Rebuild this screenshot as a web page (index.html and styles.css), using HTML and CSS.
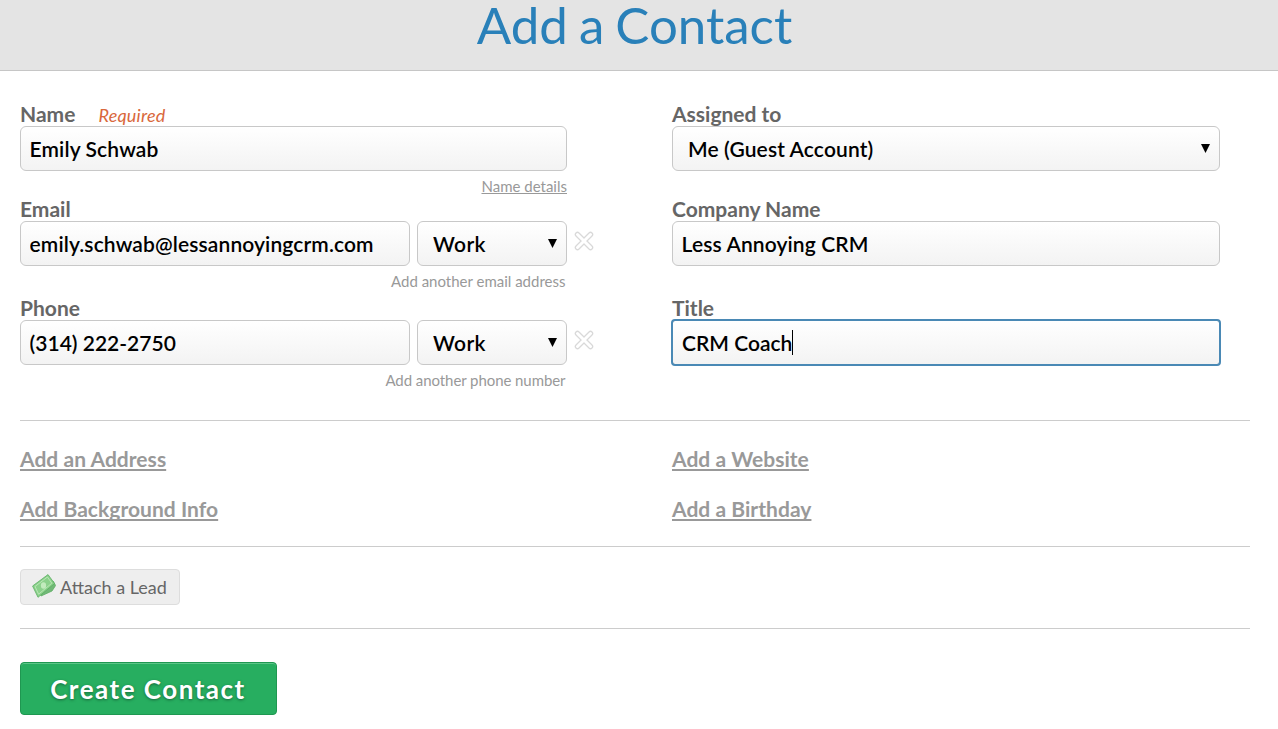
FILE: index.html
```html
<!DOCTYPE html>
<html>
<head>
    <meta charset="utf-8">
    <title>Add a Contact</title>
    <link rel="stylesheet" href="styles.css">
</head>
<body>
    <div class="header">
        <h1>Add a Contact</h1>
    </div>

    <form class="content">
        <div class="columns">
            <div class="column">
                <div class="row row-name">
                    <label>Name <em class="required">Required</em></label>
                    <input class="field" type="text" value="Emily Schwab">
                    <a class="hint underlined">Name details</a>
                </div>
                <div class="row">
                    <label>Email</label>
                    <div class="group">
                        <input class="field" type="text" value="emily.schwab@lessannoyingcrm.com" spellcheck="false">
                        <div class="select type">
                            <select class="field"><option>Work</option></select>
                            <svg class="arrow" width="9" height="9" viewBox="0 0 9 9"><path d="M0 0h9L4.5 9z"/></svg>
                        </div>
                        <svg class="remove" width="20" height="20" viewBox="0 0 20 20"><path class="edge" d="M3.5 3.5l13 13M16.5 3.5l-13 13"/><path class="inner" d="M3.5 3.5l13 13M16.5 3.5l-13 13"/></svg>
                    </div>
                    <a class="hint">Add another email address</a>
                </div>
                <div class="row">
                    <label>Phone</label>
                    <div class="group">
                        <input class="field phone" type="text" value="(314) 222-2750">
                        <div class="select type">
                            <select class="field"><option>Work</option></select>
                            <svg class="arrow" width="9" height="9" viewBox="0 0 9 9"><path d="M0 0h9L4.5 9z"/></svg>
                        </div>
                        <svg class="remove" width="20" height="20" viewBox="0 0 20 20"><path class="edge" d="M3.5 3.5l13 13M16.5 3.5l-13 13"/><path class="inner" d="M3.5 3.5l13 13M16.5 3.5l-13 13"/></svg>
                    </div>
                    <a class="hint phone-hint">Add another phone number</a>
                </div>
            </div>
            <div class="column">
                <div class="row row-name">
                    <label>Assigned to</label>
                    <div class="select">
                        <select class="field"><option>Me (Guest Account)</option></select>
                        <svg class="arrow" width="9" height="9" viewBox="0 0 9 9"><path d="M0 0h9L4.5 9z"/></svg>
                    </div>
                </div>
                <div class="row">
                    <label>Company Name</label>
                    <input class="field" type="text" value="Less Annoying CRM">
                </div>
                <div class="row">
                    <label>Title</label>
                    <div class="field focused">CRM Coach<span class="caret"></span></div>
                </div>
            </div>
        </div>

        <div class="more">
            <a>Add an Address</a>
            <a>Add a Website</a>
            <a>Add Background Info</a>
            <a>Add a Birthday</a>
        </div>

        <div class="lead">
            <button type="button" class="attach">
                <svg class="money" width="24" height="24" viewBox="0 0 24 24">
                    <path class="bill back" d="M7 13L21 7l2.6 4.5-3.6 5.5L9 22z"/>
                    <path class="bill" d="M.6 12L16 .6 22.5 9.5 6 23.3z"/>
                    <path class="frame" d="M3 12.5L15.4 3l4.4 6.2L6.6 20.2z"/>
                    <ellipse cx="11.5" cy="11.5" rx="2.6" ry="3.2"/>
                </svg>
                Attach a Lead
            </button>
        </div>

        <button type="button" class="create">Create Contact</button>
    </form>
</body>
</html>
```

FILE: styles.css
```css
* {
    box-sizing: border-box;
}

body {
    margin: 0;
    background: #fff;
    font-family: Lato, "Liberation Sans", sans-serif;
}

.header {
    height: 71px;
    background: #e4e4e4;
    border-bottom: 1px solid #c6c6c6;
}

h1 {
    margin: 0;
    padding-right: 9px;
    text-align: center;
    font-size: 51px;
    font-weight: 400;
    line-height: 50px;
    word-spacing: -2px;
    color: #2980b9;
}

.content {
    width: 1230px;
    margin-left: 20px;
    padding-top: 31px;
}

.columns {
    display: flex;
    gap: 105px;
    height: 319px;
    border-bottom: 1px solid #ccc;
}

.column {
    width: 547px;
}

.column + .column {
    width: 548px;
}

.row {
    display: flex;
    flex-direction: column;
    height: 99px;
}

.row-name {
    height: 95px;
}

label {
    height: 24px;
    font-size: 21px;
    font-weight: 700;
    line-height: 23px;
    color: #666;
}

.required {
    margin-left: 18px;
    font-size: 18px;
    font-weight: 400;
    letter-spacing: .2px;
    color: #d9683c;
}

.field {
    width: 100%;
    height: 45px;
    padding: 0 9px;
    border: 1px solid #c8c8c8;
    border-radius: 6px;
    background: linear-gradient(#fff, #f3f3f3);
    font-family: inherit;
    font-size: 21px;
    font-weight: 600;
    line-height: 43px;
    letter-spacing: .12px;
    color: #000;
    outline: none;
    appearance: none;
}

input.field {
    padding: 0 9px 1px 8.6px;
    line-height: 42px;
}

input.phone {
    letter-spacing: 0;
}

.focused {
    display: flex;
    align-items: center;
    border-color: #bbb;
    border-radius: 3px;
    outline: 2px solid #4a89b5;
    outline-offset: -1px;
    letter-spacing: 0;
}

.caret {
    width: 1px;
    height: 25px;
    background: #000;
}

.group {
    display: flex;
    gap: 7px;
    width: 574px;
}

.group > .field {
    width: 390px;
}

.select {
    position: relative;
}

.select .field {
    padding: 0 9px 0 15px;
}

.type {
    width: 150px;
    flex-shrink: 0;
}

.type .field {
    letter-spacing: .4px;
}

.arrow {
    position: absolute;
    top: 18px;
    right: 10px;
}

.remove {
    flex-shrink: 0;
    margin-top: 10px;
}

.remove path {
    fill: none;
    stroke-linecap: round;
}

.remove .edge {
    stroke: #d9d9d9;
    stroke-width: 5.5;
}

.remove .inner {
    stroke: #fff;
    stroke-width: 3;
}

.hint {
    align-self: flex-end;
    margin-top: 5px;
    padding-right: 1.5px;
    font-size: 15px;
    line-height: 20px;
    color: #999;
}

.phone-hint {
    letter-spacing: -.07px;
}

.underlined {
    padding-right: 0;
    text-decoration: underline;
}

.more {
    display: grid;
    grid-template-columns: 652px 1fr;
    grid-auto-rows: 50px;
    height: 126px;
    padding-top: 13px;
    border-bottom: 1px solid #ccc;
}

.more a {
    font-size: 21px;
    font-weight: 700;
    line-height: 50px;
    letter-spacing: .04px;
    color: #999;
    text-decoration: underline;
    text-decoration-skip-ink: none;
}

.lead {
    height: 82px;
    padding-top: 22px;
    border-bottom: 1px solid #ccc;
}

.attach {
    display: flex;
    align-items: center;
    gap: 4px;
    width: 160px;
    height: 36px;
    padding: 0 0 0 11px;
    border: 1px solid #ddd;
    border-radius: 4px;
    background: #eee;
    font-family: inherit;
    font-size: 18px;
    color: #666;
    white-space: nowrap;
}

.money {
    margin-top: -2px;
}

.bill {
    fill: #8bd18b;
    stroke: #5cae62;
    stroke-width: .8;
}

.back {
    fill: #72b878;
}

.frame {
    fill: none;
    stroke: #b9e6b5;
}

.money ellipse {
    fill: #c2ebbd;
}

.create {
    display: block;
    width: 257px;
    height: 53px;
    margin-top: 33px;
    padding: 0 1px 0 0;
    border: 1px solid #1f9751;
    border-radius: 4px;
    background: #27ae60;
    box-shadow: inset 0 1px 0 #5cc588;
    font-family: inherit;
    font-size: 26px;
    font-weight: 700;
    letter-spacing: 1.5px;
    color: #fff;
    text-shadow: 0 1px 3px #17683a;
}
```
